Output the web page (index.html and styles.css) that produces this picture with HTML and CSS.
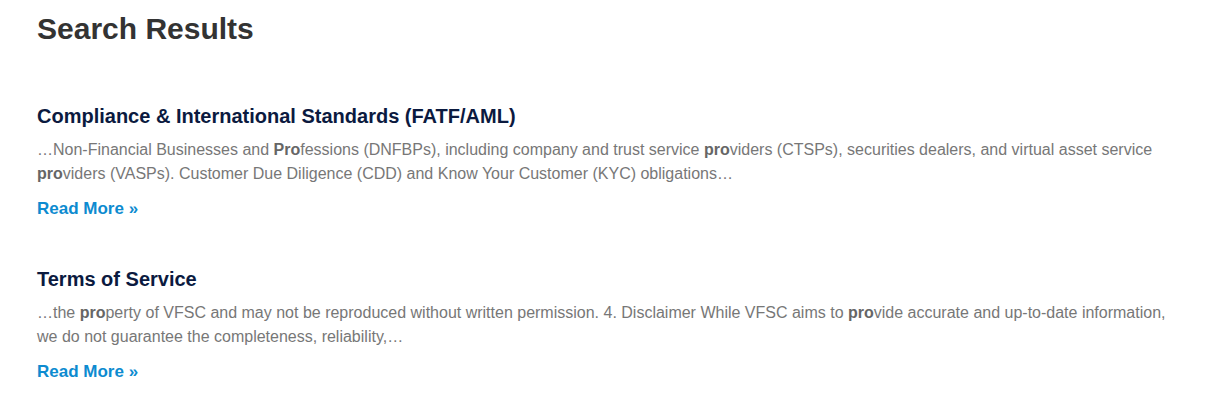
FILE: index.html
```html
<!DOCTYPE html>
<html lang="en">
<head>
<meta charset="utf-8">
<title>Search Results</title>
<link rel="stylesheet" href="styles.css">
</head>
<body>
<main class="page">
  <h1 class="page-title">Search Results</h1>
  <div class="results">
    <article class="result">
      <h2 class="result-title">Compliance &amp; International Standards (FATF/AML)</h2>
      <p class="result-excerpt">…Non-Financial Businesses and <strong>Pro</strong>fessions (DNFBPs), including company and trust service <strong>pro</strong>viders (CTSPs), securities dealers, and virtual asset service <strong>pro</strong>viders (VASPs). Customer Due Diligence (CDD) and Know Your Customer (KYC) obligations…</p>
      <a class="read-more" href="#">Read More »</a>
    </article>
    <article class="result">
      <h2 class="result-title">Terms of Service</h2>
      <p class="result-excerpt">…the <strong>pro</strong>perty of VFSC and may not be reproduced without written permission. 4. Disclaimer While VFSC aims to <strong>pro</strong>vide accurate and up-to-date information, we do not guarantee the completeness, reliability,…</p>
      <a class="read-more" href="#">Read More »</a>
    </article>
  </div>
</main>
</body>
</html>
```
FILE: styles.css
```css
html, body {
  margin: 0;
  padding: 0;
  background: #fff;
}
body {
  font-family: "Liberation Sans", Arial, sans-serif;
}
.page {
  padding: 11px 37px 0 37px;
}
.page-title {
  margin: 0;
  font-size: 30px;
  line-height: 36px;
  font-weight: bold;
  color: #333333;
}
.results {
  display: flex;
  flex-direction: column;
  gap: 46px;
  margin-top: 57px;
  max-width: 1140px;
}
.result {
  display: flex;
  flex-direction: column;
  align-items: flex-start;
}
.result-title {
  margin: 0 0 10px 0;
  font-size: 20px;
  line-height: 24px;
  font-weight: bold;
  color: #0b1a3f;
}
.result-excerpt {
  margin: 0 0 11px 0;
  font-size: 16px;
  line-height: 24px;
  color: #777777;
}
.result-excerpt strong {
  color: #666666;
  font-weight: bold;
}
.read-more {
  font-size: 17px;
  line-height: 24px;
  font-weight: bold;
  color: #0d8bd0;
  text-decoration: none;
}
```
